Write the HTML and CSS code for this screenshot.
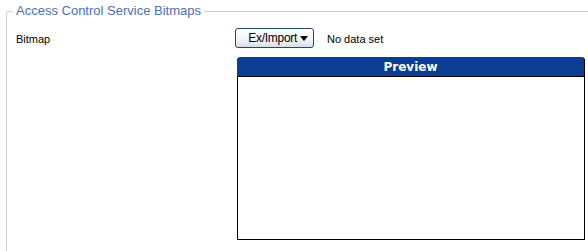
FILE: index.html
```html
<!DOCTYPE html>
<html lang="en">
<head>
  <meta charset="UTF-8">
  <meta name="viewport" content="width=device-width, initial-scale=1.0">
  <title>Access Control Service Bitmaps</title>
<link rel="stylesheet" href="styles.css">
</head>
<body>
  <fieldset class="group">
    <legend>Access Control Service Bitmaps</legend>
    <div class="form-row">
      <label class="field-label">Bitmap</label>
      <div class="field-value">
        <button class="menu-btn" type="button">Ex/Import <span class="caret"></span></button>
        <span class="status">No data set</span>
      </div>
    </div>
    <div class="preview-row">
      <div class="preview">
        <div class="preview-head">Preview</div>
        <div class="preview-body"></div>
      </div>
    </div>
  </fieldset>
</body>
</html>
```
FILE: styles.css
```css
   html, body {
     margin: 0;
     padding: 0;
     background: #fff;
     overflow: hidden;
     width: 588px;
     height: 251px;
   }
   body {
     font-family: 'Liberation Sans', Arial, sans-serif;
     font-size: 11px;
     color: #000;
   }

/* Group box with a legend in the top border */
   .group {
     box-sizing: border-box;
     margin: 4px 0 0 6px;
     padding: 0 0 20px 9px;
     width: 583px;
     border: 1px solid #d0d0d0;
     border-right: none;
     border-radius: 3px 0 0 0;
   }
   .group legend {
     margin-left: -3px;
     padding: 0 3px;
     font-size: 13px;
     line-height: 14px;
     color: #4c70b2;
   }

   .form-row {
     display: flex;
     align-items: center;
     margin-top: 10px;
     height: 20px;
   }
   .field-label {
     width: 219px;
     padding-top: 1px;
   }
   .field-value {
     display: flex;
     align-items: center;
   }
   .menu-btn {
     display: flex;
     align-items: center;
     justify-content: flex-end;
     width: 79px;
     height: 20px;
     padding: 0 5px 0 0;
     font-family: 'Liberation Sans', Arial, sans-serif;
     font-size: 12px;
     letter-spacing: -0.3px;
     color: #000;
     border: 1px solid #2a4470;
     border-radius: 3px;
     background: linear-gradient(#ffffff, #f3f4f8 60%, #d9dde8);
   }
   .caret {
     display: inline-block;
     margin-left: 3px;
     width: 0;
     height: 0;
     border-left: 4px solid transparent;
     border-right: 4px solid transparent;
     border-top: 5px solid #000;
   }
   .status {
     margin-left: 13px;
     padding-top: 1px;
   }

   .preview-row {
     padding-left: 221px;
     margin-top: 9px;
   }
   .preview {
     width: 346px;
     height: 182px;
     border: 1px solid #000;
     border-top: none;
     border-radius: 4px 4px 0 0;
   }
   .preview-head {
     height: 18px;
     line-height: 18px;
     margin: 0 -1px;
     background: #0b3d93;
     border-top: 1px solid #0b3d93;
     border-right: 1px solid #000;
     border-bottom: 1px solid #000;
     border-radius: 4px 4px 0 0;
     color: #fff;
     text-align: center;
     font-family: 'DejaVu Sans', Verdana, sans-serif;
     font-weight: bold;
     font-size: 12px;
   }
```
